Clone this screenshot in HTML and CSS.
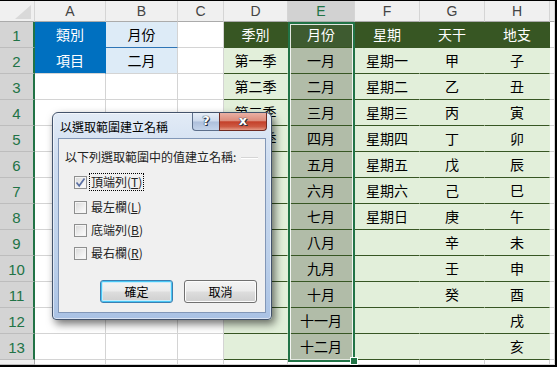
FILE: index.html
```html
<!DOCTYPE html>
<html lang="zh-Hant">
<head>
    <meta charset="UTF-8">
    <title>以選取範圍建立名稱</title>
    <link rel="stylesheet" href="styles.css">
</head>
<body>
    <div class="sheet">
        <div class="grid">
            <!-- column headers -->
            <div class="corner"></div>
            <div class="ch">A</div>
            <div class="ch">B</div>
            <div class="ch">C</div>
            <div class="ch">D</div>
            <div class="ch on">E</div>
            <div class="ch">F</div>
            <div class="ch">G</div>
            <div class="ch">H</div>
            <div class="ch"></div>

            <!-- 1 -->
            <div class="rh">1</div>
            <div class="c ka top">類別</div>
            <div class="c kb top">月份</div>
            <div class="c"></div>
            <div class="c th">季別</div>
            <div class="c th se">月份</div>
            <div class="c th">星期</div>
            <div class="c th">天干</div>
            <div class="c th">地支</div>
            <div class="c"></div>

            <!-- 2 -->
            <div class="rh">2</div>
            <div class="c ka">項目</div>
            <div class="c kb">二月</div>
            <div class="c"></div>
            <div class="c td">第一季</div>
            <div class="c td se">一月</div>
            <div class="c td">星期一</div>
            <div class="c td">甲</div>
            <div class="c td">子</div>
            <div class="c"></div>

            <!-- 3 -->
            <div class="rh">3</div>
            <div class="c"></div>
            <div class="c"></div>
            <div class="c"></div>
            <div class="c td">第二季</div>
            <div class="c td se">二月</div>
            <div class="c td">星期二</div>
            <div class="c td">乙</div>
            <div class="c td">丑</div>
            <div class="c"></div>

            <!-- 4 -->
            <div class="rh">4</div>
            <div class="c"></div>
            <div class="c"></div>
            <div class="c"></div>
            <div class="c td">第三季</div>
            <div class="c td se">三月</div>
            <div class="c td">星期三</div>
            <div class="c td">丙</div>
            <div class="c td">寅</div>
            <div class="c"></div>

            <!-- 5 -->
            <div class="rh">5</div>
            <div class="c"></div>
            <div class="c"></div>
            <div class="c"></div>
            <div class="c td">第四季</div>
            <div class="c td se">四月</div>
            <div class="c td">星期四</div>
            <div class="c td">丁</div>
            <div class="c td">卯</div>
            <div class="c"></div>

            <!-- 6 -->
            <div class="rh">6</div>
            <div class="c"></div>
            <div class="c"></div>
            <div class="c"></div>
            <div class="c td"></div>
            <div class="c td se">五月</div>
            <div class="c td">星期五</div>
            <div class="c td">戊</div>
            <div class="c td">辰</div>
            <div class="c"></div>

            <!-- 7 -->
            <div class="rh">7</div>
            <div class="c"></div>
            <div class="c"></div>
            <div class="c"></div>
            <div class="c td"></div>
            <div class="c td se">六月</div>
            <div class="c td">星期六</div>
            <div class="c td">己</div>
            <div class="c td">巳</div>
            <div class="c"></div>

            <!-- 8 -->
            <div class="rh">8</div>
            <div class="c"></div>
            <div class="c"></div>
            <div class="c"></div>
            <div class="c td"></div>
            <div class="c td se">七月</div>
            <div class="c td">星期日</div>
            <div class="c td">庚</div>
            <div class="c td">午</div>
            <div class="c"></div>

            <!-- 9 -->
            <div class="rh">9</div>
            <div class="c"></div>
            <div class="c"></div>
            <div class="c"></div>
            <div class="c td"></div>
            <div class="c td se">八月</div>
            <div class="c td"></div>
            <div class="c td">辛</div>
            <div class="c td">未</div>
            <div class="c"></div>

            <!-- 10 -->
            <div class="rh">10</div>
            <div class="c"></div>
            <div class="c"></div>
            <div class="c"></div>
            <div class="c td"></div>
            <div class="c td se">九月</div>
            <div class="c td"></div>
            <div class="c td">壬</div>
            <div class="c td">申</div>
            <div class="c"></div>

            <!-- 11 -->
            <div class="rh">11</div>
            <div class="c"></div>
            <div class="c"></div>
            <div class="c"></div>
            <div class="c td"></div>
            <div class="c td se">十月</div>
            <div class="c td"></div>
            <div class="c td">癸</div>
            <div class="c td">酉</div>
            <div class="c"></div>

            <!-- 12 -->
            <div class="rh">12</div>
            <div class="c"></div>
            <div class="c"></div>
            <div class="c"></div>
            <div class="c td"></div>
            <div class="c td se">十一月</div>
            <div class="c td"></div>
            <div class="c td"></div>
            <div class="c td">戌</div>
            <div class="c"></div>

            <!-- 13 -->
            <div class="rh">13</div>
            <div class="c"></div>
            <div class="c"></div>
            <div class="c"></div>
            <div class="c td"></div>
            <div class="c td se">十二月</div>
            <div class="c td"></div>
            <div class="c td"></div>
            <div class="c td">亥</div>
            <div class="c"></div>

            <!-- 14 (cut off) -->
            <div class="rh off"></div>
            <div class="c"></div>
            <div class="c"></div>
            <div class="c"></div>
            <div class="c"></div>
            <div class="c"></div>
            <div class="c"></div>
            <div class="c"></div>
            <div class="c"></div>
            <div class="c"></div>
        </div>

        <!-- selected range E1:E13 -->
        <div class="selection"><span class="handle"></span></div>

        <!-- dialog -->
        <div class="dlg">
            <div class="dlg-title">
                <span class="dlg-caption">以選取範圍建立名稱</span>
                <div class="dlg-ctrls">
                    <span class="tb-help">?</span>
                    <span class="tb-close">x</span>
                </div>
            </div>
            <div class="dlg-body">
                <div class="grp">
                    <span>以下列選取範圍中的值建立名稱:</span>
                    <i class="grp-line"></i>
                </div>
                <div class="opts">
                    <div class="opt">
                        <span class="cb"><svg width="11" height="11" viewBox="0 0 11 11"><polyline points="1.5,5.5 4.2,8.8 9.5,1.5" fill="none" stroke="#5a6fa3" stroke-width="1.7"/></svg></span>
                        <span class="opt-text focus">頂端列(<u>T</u>)</span>
                    </div>
                    <div class="opt">
                        <span class="cb"></span>
                        <span class="opt-text">最左欄(<u>L</u>)</span>
                    </div>
                    <div class="opt">
                        <span class="cb"></span>
                        <span class="opt-text">底端列(<u>B</u>)</span>
                    </div>
                    <div class="opt">
                        <span class="cb"></span>
                        <span class="opt-text">最右欄(<u>R</u>)</span>
                    </div>
                </div>
                <div class="acts">
                    <button class="pb def" type="button">確定</button>
                    <button class="pb" type="button">取消</button>
                </div>
            </div>
        </div>
    </div>
</body>
</html>
```

FILE: styles.css
```css
body {
    margin: 0;
    padding: 0;
    background-color: #000; /* marco negro de la captura */
    width: 557px;
    height: 367px;
    overflow: hidden;
}

.sheet {
    position: relative;
    width: 555px;
    height: 364px;
    margin-top: 1px;
    overflow: hidden;
    background-color: #fff;
    font-family: "Noto Sans CJK TC", sans-serif;
}

.grid {
    display: grid;
    grid-template-columns: 35px 71px 72px 46px 64px 67px 65px 65px 65px 5px;
    grid-template-rows: 21px repeat(13, 26px) 5px;
}

/* headers */
.corner {
    position: relative;
    background-color: #f0f0f0;
    border-right: 1px solid #d5d5d5;
    border-bottom: 1px solid #ababab;
}

.corner::after {
    content: "";
    position: absolute;
    left: 15px;
    top: 4px;
    width: 16px;
    height: 14px;
    background-color: #d9d9d9;
    clip-path: polygon(100% 0, 100% 100%, 0 100%);
}

.ch {
    background-color: #f0f0f0;
    border-right: 1px solid #d5d5d5;
    border-bottom: 1px solid #ababab;
    color: #444;
    font-family: "Liberation Sans", sans-serif;
    font-size: 14px;
    line-height: 20px;
    text-align: center;
}

.ch.on {
    background-color: #d2d2d2;
    color: #217346;
}

.rh {
    background-color: #d4d4d4;
    border-right: 2px solid #217346;
    border-bottom: 1px solid #bdbdbd;
    color: #217346;
    font-family: "Liberation Sans", sans-serif;
    font-size: 15px;
    line-height: 27px;
    text-align: center;
}

.rh.off {
    background-color: #f0f0f0;
    border-right: 1px solid #ababab;
}

/* cells */
.c {
    border-right: 1px solid #d4d4d4;
    border-bottom: 1px solid #d4d4d4;
    font-size: 14px;
    line-height: 25px;
    text-align: center;
    color: #000;
    white-space: nowrap;
    overflow: hidden;
}

.ka {
    background-color: #0070c0;
    border-right-color: #0070c0;
    color: #fff;
}

.ka.top {
    border-bottom-color: #0070c0;
}

.kb {
    background-color: #ddebf7;
}

.kb.top {
    border-bottom-color: #2e75b6;
}

.th {
    background-color: #375623;
    border-right-color: #375623;
    border-bottom-color: #375623;
    color: #fff;
}

.td {
    background-color: #e2efda;
    border-right-color: #e2efda;
    border-bottom-color: #375623;
}

.th.se {
    background-color: #3e5b30;
    border-right-color: #3e5b30;
}

.td.se {
    background-color: #b1bca8;
    border-right-color: #b1bca8;
}

/* selection box */
.selection {
    position: absolute;
    left: 288px;
    top: 21px;
    width: 67px;
    height: 340px;
    box-sizing: border-box;
    border: 2px solid #217346;
    box-shadow: inset 0 0 0 1px rgba(255, 255, 255, 0.85);
}

.handle {
    position: absolute;
    right: -5px;
    bottom: -5px;
    width: 6px;
    height: 6px;
    background-color: #217346;
    border: 1px solid #fff;
}

/* dialog */
.dlg {
    position: absolute;
    left: 52px;
    top: 111px;
    width: 220px;
    height: 208px;
    box-sizing: border-box;
    display: flex;
    flex-direction: column;
    border: 1px solid #43536b;
    border-radius: 6px 6px 4px 4px;
    background: linear-gradient(180deg, #e2ebf6 0%, #cddcf0 25%, #bcd0ea 70%, #aac2e4 100%);
    box-shadow: 3px 4px 9px rgba(0, 0, 0, 0.55), inset 0 0 0 1px rgba(255, 255, 255, 0.55);
    font-family: "Noto Sans CJK TC", sans-serif;
    font-size: 12px;
    color: #000;
}

.dlg-title {
    display: flex;
    align-items: flex-start;
    height: 25px;
}

.dlg-caption {
    flex: 1;
    padding-left: 7px;
    line-height: 27px;
}

.dlg-ctrls {
    display: flex;
    margin-right: 4px;
}

.tb-help,
.tb-close {
    height: 18px;
    box-sizing: border-box;
    border: 1px solid #5d6f8c;
    border-top: none;
    color: #fff;
    font-family: "DejaVu Sans", sans-serif;
    font-weight: bold;
    font-size: 13px;
    line-height: 16px;
    text-align: center;
    text-shadow: 0 0 1px #1e2a3c, 0 0 1px #1e2a3c, 1px 1px 0 #2a3345;
}

.tb-help {
    width: 27px;
    border-right: none;
    border-radius: 0 0 0 4px;
    background: linear-gradient(180deg, #e8eff8 0%, #ccd9ec 48%, #aebfdb 52%, #c3d3ea 100%);
}

.tb-close {
    width: 48px;
    border-color: #6f2b22;
    border-radius: 0 0 4px 0;
    background: linear-gradient(180deg, #eab0a4 0%, #dc8d7c 45%, #c4402a 52%, #cd5a43 80%, #e49a86 100%);
}

.dlg-body {
    flex: 1;
    margin: 0 5px 6px 5px;
    border: 1px solid #8297b7;
    background-color: #f0f0f0;
    display: flex;
    flex-direction: column;
}

.grp {
    display: flex;
    align-items: center;
    margin-top: 10px;
    padding: 0 7px 0 6px;
    line-height: 16px;
    color: #222;
}

.grp-line {
    flex: 1;
    margin-left: 5px;
    margin-top: 1px;
    border-top: 1px solid #d5d5d5;
    border-bottom: 1px solid #fff;
}

.opts {
    display: flex;
    flex-direction: column;
    gap: 5px;
    margin-top: 8px;
    padding-left: 15px;
}

.opt {
    display: flex;
    align-items: center;
    height: 18px;
}

.opt:first-child {
    margin-bottom: 2px;
}

.cb {
    width: 13px;
    height: 13px;
    box-sizing: border-box;
    border: 1px solid #8e8f8f;
    background: linear-gradient(135deg, #d8d8d8 0%, #f0f0f0 60%, #fdfdfd 100%);
    box-shadow: inset 0 0 0 1px #f4f4f4;
    display: flex;
    align-items: center;
    justify-content: center;
}

.opt-text {
    margin-left: 3px;
    padding: 0 1px;
    line-height: 16px;
    color: #222;
}

.opt-text.focus {
    outline: 1px dotted #000;
    outline-offset: 0;
}

.acts {
    display: flex;
    justify-content: flex-end;
    gap: 11px;
    margin-top: 18px;
    padding-right: 8px;
}

.pb {
    width: 73px;
    height: 23px;
    padding: 0;
    border: 1px solid #707070;
    border-radius: 3px;
    background: linear-gradient(180deg, #f3f3f3 0%, #ebebeb 48%, #dddddd 52%, #cfcfcf 100%);
    box-shadow: inset 0 0 0 1px #fcfcfc;
    font-family: "Noto Sans CJK TC", sans-serif;
    font-size: 12px;
    color: #000;
}

.pb.def {
    border-color: #3c7fb1;
    box-shadow: inset 0 0 0 1px #48c6f4, inset 0 0 0 2px #c6ecfb;
}
```
